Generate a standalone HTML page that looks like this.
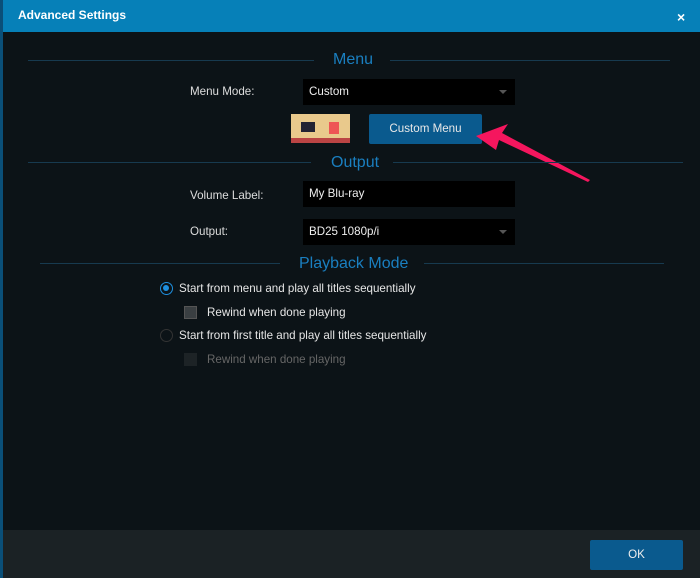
<!DOCTYPE html>
<html><head><style>
*{margin:0;padding:0;box-sizing:border-box}
body{width:700px;height:578px;background:#0c1317;position:relative;overflow:hidden;font-family:"Liberation Sans",sans-serif;font-size:11.6px;color:#e6e6e6}
.a{position:absolute}
.hdr{left:3px;top:0;width:697px;height:32px;background:#0680b8}
.h{color:#1a7fc0;font-size:16px}
.line{height:1px;background:#173a4f}
.box{background:#000;height:26px;padding-left:6px;line-height:26px;color:#eee}
.dd::after{content:"";position:absolute;right:8px;top:11px;border:4px solid transparent;border-top:4px solid #555}
.lbl{color:#ddd}
</style></head><body>
<div class="a" style="left:0;top:0;width:3px;height:578px;background:#0a4f78"></div>
<div class="a hdr"></div>
<div class="a" style="left:18px;top:8px;font-weight:bold;color:#fff;font-size:12px">Advanced Settings</div>
<div class="a" style="left:677px;top:9px;color:#fff;font-weight:bold;font-size:14px">×</div>

<div class="a line" style="left:28px;top:60px;width:286px"></div>
<div class="a line" style="left:390px;top:60px;width:280px"></div>
<div class="a h" style="left:333px;top:51px">Menu</div>
<div class="a lbl" style="left:190px;top:85px">Menu Mode:</div>
<div class="a box dd" style="left:303px;top:79px;width:212px">Custom</div>
<div class="a" style="left:291px;top:114px;width:59px;height:29px;background:#e9c98c"><div class="a" style="left:10px;top:8px;width:14px;height:10px;background:#223"></div><div class="a" style="left:38px;top:8px;width:10px;height:12px;background:#e55"></div><div class="a" style="left:0;top:24px;width:59px;height:5px;background:#b44"></div></div>
<div class="a" style="left:369px;top:114px;width:113px;height:30px;background:#0a5a8e;border-radius:2px;text-align:center;line-height:30px;color:#e8e8e8">Custom Menu</div>
<svg class="a" style="left:470px;top:120px" width="125" height="65"><path d="M6 16 L38 4 L32 13 L120 60 L118 62 L29 20 L26 30 Z" fill="#f5165e"/></svg>

<div class="a line" style="left:28px;top:162px;width:283px"></div>
<div class="a line" style="left:393px;top:162px;width:290px"></div>
<div class="a h" style="left:331px;top:154px">Output</div>
<div class="a lbl" style="left:190px;top:189px">Volume Label:</div>
<div class="a box" style="left:303px;top:181px;width:212px">My Blu-ray</div>
<div class="a lbl" style="left:190px;top:225px">Output:</div>
<div class="a box dd" style="left:303px;top:219px;width:212px">BD25 1080p/i</div>

<div class="a line" style="left:40px;top:263px;width:240px"></div>
<div class="a line" style="left:424px;top:263px;width:240px"></div>
<div class="a h" style="left:299px;top:255px">Playback Mode</div>

<div class="a" style="left:160px;top:282px;width:13px;height:13px;border-radius:50%;border:1.5px solid #1e90e0;background:#0c1317"><div class="a" style="left:2px;top:2px;width:6px;height:6px;border-radius:50%;background:#1e90e0"></div></div>
<div class="a" style="left:179px;top:282px">Start from menu and play all titles sequentially</div>
<div class="a" style="left:184px;top:306px;width:13px;height:13px;background:#3a3f42;border:1px solid #555"></div>
<div class="a" style="left:207px;top:306px">Rewind when done playing</div>
<div class="a" style="left:160px;top:329px;width:13px;height:13px;border-radius:50%;border:1.5px solid #333"></div>
<div class="a" style="left:179px;top:329px">Start from first title and play all titles sequentially</div>
<div class="a" style="left:184px;top:353px;width:13px;height:13px;background:#1d2326"></div>
<div class="a" style="left:207px;top:353px;color:#666">Rewind when done playing</div>

<div class="a" style="left:3px;top:530px;width:697px;height:48px;background:#1b2225"></div>
<div class="a" style="left:590px;top:540px;width:93px;height:30px;background:#0a5a8e;border-radius:2px;text-align:center;line-height:30px;color:#eee">OK</div>
</body></html>
